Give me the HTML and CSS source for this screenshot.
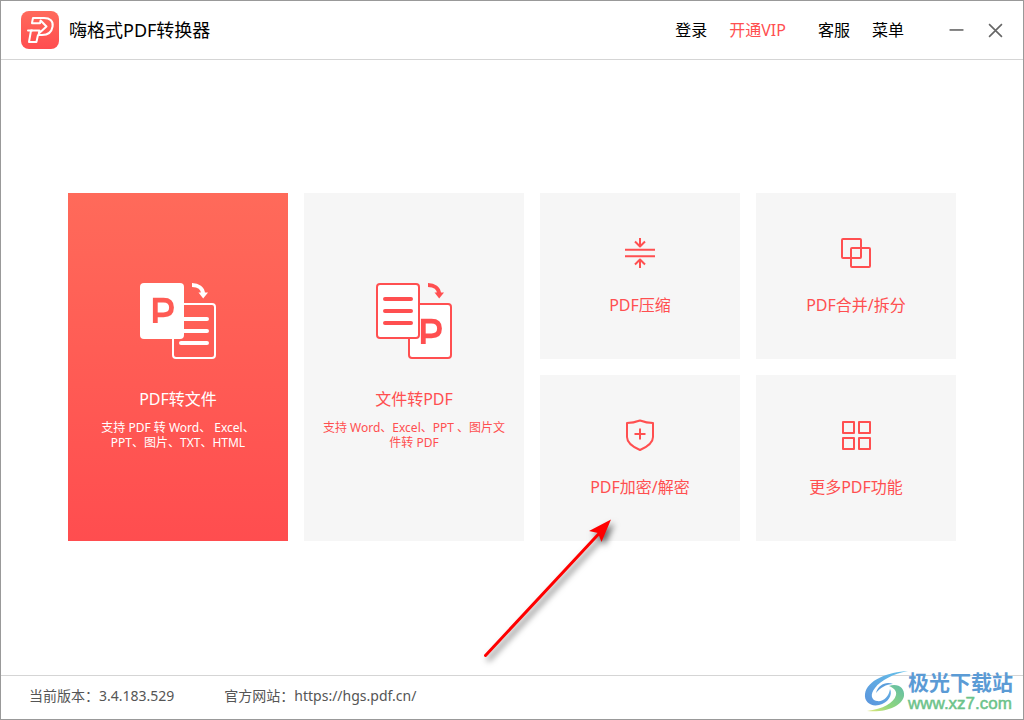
FILE: index.html
```html
<!DOCTYPE html>
<html lang="zh-CN">
<head>
<meta charset="utf-8">
<title>嗨格式PDF转换器</title>
<link rel="stylesheet" href="styles.css">
</head>
<body>
<div class="window">
  <header class="header">
    <svg class="logo" viewBox="0 0 38 38" aria-hidden="true">
      <defs><linearGradient id="logo-fill" x1="0" y1="0" x2="0" y2="1"><stop offset="0" stop-color="#ff6a5c"/><stop offset="1" stop-color="#ff4d4f"/></linearGradient></defs>
      <rect width="38" height="38" rx="8" fill="url(#logo-fill)"/>
      <path d="M11 11.700L12 7H23C29 7 32.500 10 31.600 15.500C30.700 21 26.500 24 21 24H17L15.400 31H8L10 19.500H18.500L17.800 22.500L25.500 15.500L19.600 9.500L19 12.300H11" fill="none" stroke="#fff" stroke-width="2" stroke-linejoin="round" stroke-linecap="round"/>
      <path d="M7 19.500H11" stroke="#fff" stroke-width="2" stroke-linecap="round"/>
    </svg>
    <h1 class="title">嗨格式PDF转换器</h1>
    <nav class="nav">
      <button class="nav-item" type="button">登录</button>
      <button class="nav-item nav-vip" type="button">开通VIP</button>
      <button class="nav-item" type="button">客服</button>
      <button class="nav-item" type="button">菜单</button>
    </nav>
    <div class="controls">
      <button class="control" type="button" aria-label="最小化"><svg viewBox="0 0 14 14"><path d="M.5 6.500h13"/></svg></button>
      <button class="control" type="button" aria-label="关闭"><svg viewBox="0 0 14 14"><path d="M1 1l12 12M13 1L1 13"/></svg></button>
    </div>
  </header>

  <main class="main">
    <div class="grid">
      <button class="card card-large card-primary" type="button">
        <svg class="icon-large" viewBox="0 0 76 76" aria-hidden="true">
          <rect x="33" y="21" width="42" height="54" rx="3" fill="none" stroke="#fff" stroke-width="2"/>
          <path d="M36 36h31M36 48h31M41 60h26" stroke="#fff" stroke-width="4" stroke-linecap="round"/>
          <rect width="44" height="56" rx="4" fill="#fff"/>
          <path d="M15.300 40V17.200h8.200q8 0 8 7.300t-8 7.300h-8.200" fill="none" stroke="#ff5b54" stroke-width="4.800"/>
          <path d="M52 2c6 0 11 3 11 9" fill="none" stroke="#fff" stroke-width="4"/>
          <path d="M58.500 9.500h9.500l-4.800 6z" fill="#fff"/>
        </svg>
        <span class="card-title">PDF转文件</span>
        <span class="card-text">支持 PDF 转 Word、 Excel、<br>PPT、图片、TXT、HTML</span>
      </button>
      <button class="card card-large" type="button">
        <svg class="icon-large" viewBox="0 0 76 76" aria-hidden="true">
          <rect x="33" y="21" width="42" height="54" rx="3" fill="#fff" stroke="#ff4f50" stroke-width="2"/>
          <path d="M47.300 61V38.200h8.200q8 0 8 7.300t-8 7.300h-8.200" fill="none" stroke="#ff4f50" stroke-width="4.800"/>
          <rect x="1" y="1" width="42" height="54" rx="3" fill="#fff" stroke="#ff4f50" stroke-width="2"/>
          <path d="M9 16h26M9 28h26M9 40h26" stroke="#ff4f50" stroke-width="4" stroke-linecap="round"/>
          <path d="M52 2c6 0 11 3 11 9" fill="none" stroke="#ff4f50" stroke-width="4"/>
          <path d="M58.500 9.500h9.500l-4.800 6z" fill="#ff4f50"/>
        </svg>
        <span class="card-title">文件转PDF</span>
        <span class="card-text">支持 Word、Excel、PPT 、图片文<br>件转 PDF</span>
      </button>
      <button class="card" type="button">
        <svg class="icon" viewBox="0 0 32 32" aria-hidden="true">
          <path d="M1 12.700h30M1 19.300h30M16 1v8.500M11 4.500l5 5 5-5M16 31v-8.500M11 27.500l5-5 5 5"/>
        </svg>
        <span class="card-title">PDF压缩</span>
      </button>
      <button class="card" type="button">
        <svg class="icon" viewBox="0 0 32 32" aria-hidden="true">
          <rect x="2" y="2" width="19" height="19" rx="1"/><rect x="11" y="11" width="19" height="19" rx="1"/>
        </svg>
        <span class="card-title">PDF合并/拆分</span>
      </button>
      <button class="card" type="button">
        <svg class="icon" viewBox="0 0 32 32" aria-hidden="true">
          <path d="M16 1.500C12 3 7 4 3 4V18C3 24 9 28 16 31C23 28 29 24 29 18V4C25 4 20 3 16 1.500ZM16 9.500v11M10.500 15h11"/>
        </svg>
        <span class="card-title">PDF加密/解密</span>
      </button>
      <button class="card" type="button">
        <svg class="icon" viewBox="0 0 32 32" aria-hidden="true">
          <path d="M3 3h11v11H3zM19 3h11v11H19zM3 19h11v11H3zM19 19h11v11H19z"/>
        </svg>
        <span class="card-title">更多PDF功能</span>
      </button>
      <svg class="pointer" viewBox="0 0 160 170" aria-hidden="true">
        <path d="M15.500 155.500L130 32.500" stroke="#f00" stroke-width="3" stroke-linecap="round"/>
        <path d="M141 19.500L119 31L128 33L131.500 42z" fill="#f00"/>
      </svg>
    </div>
  </main>

  <footer class="footer">
    <span>当前版本：3.4.183.529</span>
    <span>官方网站：<a class="site" href="https://hgs.pdf.cn/">https://hgs.pdf.cn/</a></span>
  </footer>

  <div class="watermark">
    <svg class="swirl" viewBox="0 0 44 42" aria-hidden="true">
      <defs>
        <linearGradient id="swirl-a" x1="1" y1="0" x2="0" y2="1"><stop offset="0" stop-color="#66c2ea"/><stop offset="1" stop-color="#5b94dc"/></linearGradient>
        <linearGradient id="swirl-b" x1="1" y1="0" x2="0" y2="1"><stop offset="0" stop-color="#62bda9"/><stop offset=".6" stop-color="#8ed67d"/><stop offset="1" stop-color="#e0e77c"/></linearGradient>
      </defs>
      <path d="M44 0C24 1 3 9 1 23C0 31 7 36 15 34C24 32 29 24 26 18C25 26 19 31 13 30C7 29 6 23 11 17C17 9 29 3 44 0Z" fill="url(#swirl-a)"/>
      <path d="M12 22C14 14 22 10 29 13C22 13 16 17 12 22Z" fill="#5b9edc"/>
      <path d="M25 15C34 12 41 17 40 25C38 35 22 42 3 40C19 38 30 32 32 24C33 20 30 17 25 15Z" fill="url(#swirl-b)"/>
    </svg>
    <div class="watermark-text">
      <span class="watermark-name">极光下载站</span>
      <span class="watermark-url">www.xz7.com</span>
    </div>
  </div>
</div>
</body>
</html>
```
FILE: styles.css
```css
* { box-sizing: border-box; }

body {
  margin: 0;
  font-family: "Noto Sans", "Noto Sans CJK SC", sans-serif;
  font-size: 16px;
  color: #000;
}

button {
  margin: 0;
  padding: 0;
  border: 0;
  background: none;
  font: inherit;
  color: inherit;
  cursor: pointer;
}

.window {
  position: relative;
  display: flex;
  flex-direction: column;
  min-height: 100vh;
  border: 1px solid #999;
  background: #fff;
}

.header {
  display: flex;
  align-items: center;
  padding: 10px 20px;
  border-bottom: 1px solid #d5d5d5;
}

.logo { width: 38px; height: 38px; }

.title {
  margin: 0 auto 0 10px;
  font-size: 18px;
  font-weight: 400;
  line-height: 24px;
}

.nav { display: flex; gap: 22px; line-height: 24px; }

.nav-vip { margin-right: 10px; color: #ff4f50; }

.controls { display: flex; gap: 24px; margin-left: 45px; }

.control { display: flex; }

.control svg {
  width: 15px;
  height: 15px;
  fill: none;
  stroke: #666;
  stroke-width: 1.5;
}

.main {
  flex: 1;
  display: flex;
  align-items: center;
  justify-content: center;
  padding: 16px 16px 18px;
}

.grid {
  position: relative;
  display: grid;
  grid-template-columns: 220fr 220fr 200fr 200fr;
  grid-auto-rows: minmax(166px, auto);
  gap: 16px;
  width: 100%;
  max-width: 888px;
}

.card {
  display: flex;
  flex-direction: column;
  align-items: center;
  justify-content: flex-start;
  padding-top: 44px;
  background: #f6f6f6;
  color: #ff4f50;
}

.card-large { grid-row: span 2; padding-top: 90px; }

.card-primary {
  background: linear-gradient(#ff6a5a, #ff4d4f);
  color: #fff;
}

.icon {
  width: 32px;
  height: 32px;
  fill: none;
  stroke: #ff4f50;
  stroke-width: 2;
  stroke-linejoin: round;
}

.icon-large { width: 76px; height: 76px; }

.card-title { margin-top: 24px; line-height: 24px; }

.card-large .card-title { margin-top: 28px; }

.card-text { margin-top: 9px; font-size: 12px; line-height: 15px; }

.pointer {
  position: absolute;
  left: 402px;
  top: 307px;
  width: 160px;
  height: 170px;
  overflow: visible;
  pointer-events: none;
  filter: drop-shadow(3px 4px 3px rgba(0, 0, 0, 0.6));
}

.footer {
  display: flex;
  gap: 50px;
  padding: 8px 28px 11px;
  border-top: 1px solid #d5d5d5;
  font-size: 14px;
  line-height: 24px;
  color: #555;
}

.site { color: inherit; text-decoration: none; }

.watermark {
  position: absolute;
  right: 10px;
  bottom: 5px;
  display: flex;
  align-items: center;
}

.swirl { width: 44px; height: 42px; }

.watermark-text {
  display: flex;
  flex-direction: column;
  white-space: nowrap;
}

.watermark-name {
  font-size: 21px;
  font-weight: 700;
  line-height: 24px;
  color: #5b9bd5;
}

.watermark-url {
  font-family: "Liberation Sans", sans-serif;
  font-size: 17px;
  line-height: 20px;
  color: #6cc38a;
  -webkit-text-stroke: 0.5px #6cc38a;
}
```
